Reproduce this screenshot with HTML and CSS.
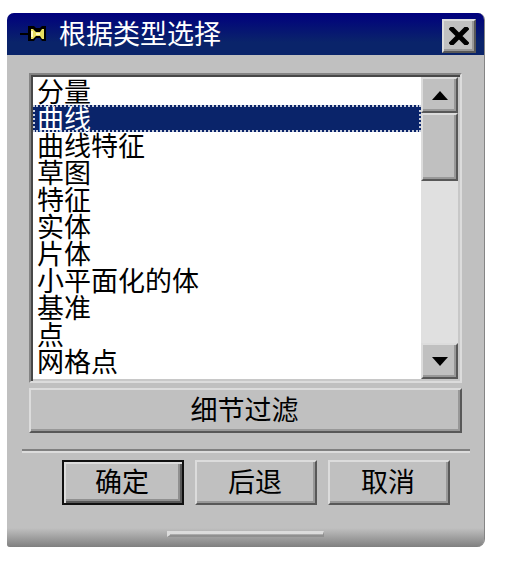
FILE: index.html
```html
<!DOCTYPE html>
<html lang="zh-CN">
<head>
    <meta charset="UTF-8">
    <meta name="viewport" content="width=device-width, initial-scale=1.0">
    <title>根据类型选择</title>
    <link rel="stylesheet" href="styles.css">
</head>
<body>

<div class="dialog" role="dialog" aria-labelledby="dialog-title">
    <div class="titlebar">
        <svg class="pin" width="28" height="20" viewBox="0 0 28 20">
            <path d="M1 9h9v2H1z" fill="#000"/>
            <path d="M9 2h6l2 2h4l2-2h4v15h-4l-2-3h-4l-2 3H9z" fill="#000"/>
            <path d="M12 5h2l3 3h4l2-3h2v10h-2l-2-3h-4l-3 3h-2z" fill="#e8e060"/>
            <path d="M12 7h2v6h-2zM17 9h4v2h-4z" fill="#fffbc8"/>
        </svg>
        <h1 id="dialog-title">根据类型选择</h1>
        <button class="close" type="button" aria-label="Close">
            <svg width="20" height="18" viewBox="0 0 20 18">
                <path d="M3 2l14 14M17 2L3 16" fill="none" stroke="#000" stroke-width="5" stroke-linecap="square"/>
            </svg>
        </button>
    </div>

    <div class="content">
        <div class="listbox">
            <select class="type-list" size="11" aria-labelledby="dialog-title">
                <option>分量</option>
                <option selected>曲线</option>
                <option>曲线特征</option>
                <option>草图</option>
                <option>特征</option>
                <option>实体</option>
                <option>片体</option>
                <option>小平面化的体</option>
                <option>基准</option>
                <option>点</option>
                <option>网格点</option>
            </select>
            <div class="scrollbar">
                <button class="scroll-btn" type="button" aria-label="Scroll up">
                    <svg width="16" height="9" viewBox="0 0 16 9"><path d="M8 0l8 9H0z" fill="#000"/></svg>
                </button>
                <div class="thumb"></div>
                <button class="scroll-btn scroll-down" type="button" aria-label="Scroll down">
                    <svg width="16" height="9" viewBox="0 0 16 9"><path d="M0 0h16L8 9z" fill="#000"/></svg>
                </button>
            </div>
        </div>
        <button class="btn filter" type="button">细节过滤</button>
    </div>

    <hr class="separator">

    <div class="actions">
        <button class="btn default" type="button">确定</button>
        <button class="btn" type="button">后退</button>
        <button class="btn" type="button">取消</button>
    </div>

    <div class="footer">
        <div class="grip"></div>
    </div>
</div>

</body>
</html>
```
FILE: styles.css
```css
* {
    box-sizing: border-box;
}
body {
    margin: 0;
    padding: 13px 40px 14px 7px;
    background: #fff;
    color: #000;
    font-family: "Noto Sans CJK SC", sans-serif;
    font-size: 27px;
}
button {
    padding: 0;
    font: inherit;
    color: inherit;
}
.dialog {
    background: #c0c0c0;
    border-right: 1px solid #858585;
    border-radius: 7px 7px 8px 3px;
    overflow: hidden;
}
.titlebar {
    display: flex;
    align-items: center;
    height: 42px;
    padding: 0 8px 0 12px;
    background: linear-gradient(#00007e, #0a246a 70%);
    color: #fff;
}
.titlebar h1 {
    flex: 1;
    margin: 0 0 2px 12px;
    font-size: 27px;
    font-weight: 400;
    line-height: 40px;
}
.close,
.scroll-btn,
.thumb,
.btn {
    background: #c0c0c0;
    border: 2px solid;
    border-color: #dcdcdc #585858 #585858 #dcdcdc;
    border-radius: 0;
    box-shadow: inset -2px -2px #989898;
}
.close,
.scroll-btn {
    display: flex;
    align-items: center;
    justify-content: center;
}
.close {
    width: 34px;
    height: 34px;
    margin-top: 4px;
}
.content {
    padding: 18px 22px 16px;
}
.listbox {
    display: flex;
    height: 310px;
    padding: 2px;
    background: #fff;
    border: 2px solid;
    border-color: #848484 #dcdcdc #dcdcdc #848484;
    box-shadow: inset 2px 2px #484848, inset -2px -2px #c8c8c8;
}
.type-list {
    flex: 1;
    min-width: 0;
    margin: 0;
    padding: 1px 0 0;
    border: 0;
    border-radius: 0;
    outline: 0;
    overflow: hidden;
    background: #fff;
    font: inherit;
    color: #000;
}
.type-list option {
    display: flex;
    align-items: center;
    height: 27px;
    min-height: 27px;
    padding: 0 4px 3px;
    color: #000;
}
.type-list option:checked {
    background: linear-gradient(#0a246a, #0a246a);
    outline: 2px dotted #c8cedc;
    outline-offset: -2px;
    color: #fff;
}
.scrollbar {
    display: flex;
    flex-direction: column;
    width: 37px;
    background: #e0e0e0;
}
.scroll-btn {
    height: 36px;
}
.scroll-down {
    margin-top: auto;
}
.thumb {
    height: 68px;
}
.btn {
    height: 45px;
    padding: 0 2px 4px 0;
    line-height: 32px;
}
.filter {
    display: block;
    width: 100%;
    margin-top: 5px;
}
.separator {
    height: 4px;
    margin: 0 14px 0 15px;
    border: 0;
    border-top: 2px solid #808080;
    border-bottom: 2px solid #dcdcdc;
}
.actions {
    display: flex;
    gap: 11px;
    padding: 7px 34px 0 55px;
}
.actions .btn {
    flex: 1;
}
.actions .default {
    border-color: #101010;
    box-shadow: inset 2px 2px #dcdcdc, inset -2px -2px #585858, inset -4px -4px #909090;
}
.footer {
    height: 42px;
    padding-top: 26px;
    background: linear-gradient(#c0c0c0 55%, #808080);
}
.grip {
    width: 33%;
    height: 6px;
    margin: 0 auto;
    border: 3px solid;
    border-color: #dcdcdc #909090 #909090 #dcdcdc;
    border-right-width: 1px;
    border-bottom-width: 2px;
}
```
